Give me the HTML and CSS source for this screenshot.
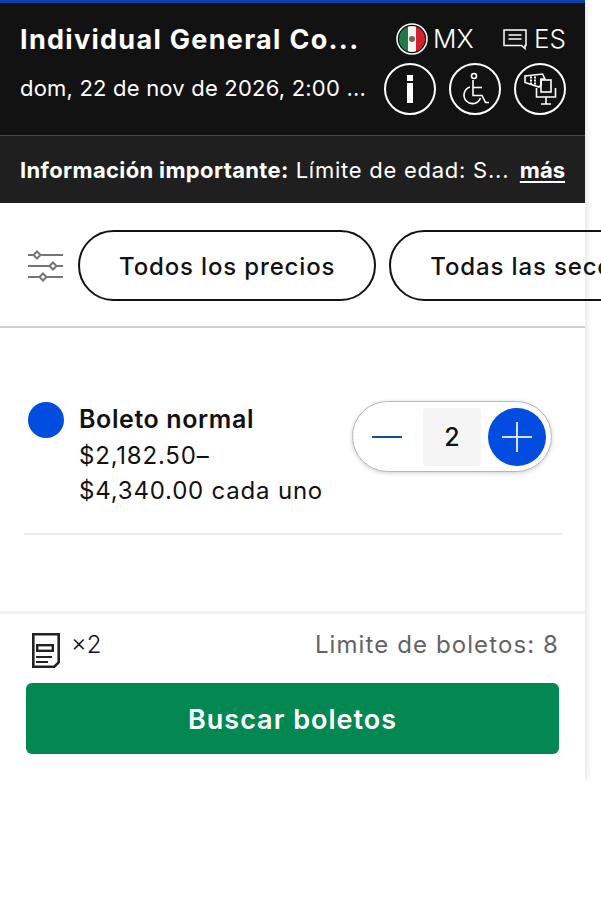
FILE: index.html
```html
<!DOCTYPE html>
<html lang="es">
<head>
    <meta charset="UTF-8">
    <title>Buscar boletos</title>
    <link rel="stylesheet" href="styles.css">
</head>
<body>
    <div class="panel">
        <header class="event-header">
            <div class="event-text">
                <h1>Individual General Co...</h1>
                <p>dom, 22 de nov de 2026, 2:00 ...</p>
            </div>
            <div class="event-tools">
                <div class="locale">
                    <span class="locale-item">
                        <svg class="flag" width="34" height="34" viewBox="0 0 34 34">
                            <clipPath id="flag-clip"><circle cx="17" cy="17" r="13"/></clipPath>
                            <g clip-path="url(#flag-clip)">
                                <rect x="4" y="4" width="9" height="26" fill="#1f7a45"/>
                                <rect x="13" y="4" width="8" height="26" fill="#f4f4f4"/>
                                <rect x="21" y="4" width="9" height="26" fill="#d3202f"/>
                                <circle cx="17" cy="17" r="3" fill="#77674a"/>
                            </g>
                            <circle cx="17" cy="17" r="15" fill="none" stroke="#fff" stroke-width="1.5"/>
                        </svg>
                        MX
                    </span>
                    <span class="locale-item lang">
                        <svg width="26" height="24" viewBox="0 0 26 24" fill="none" stroke="#fff" stroke-width="1.5">
                            <path d="M2 3h22v15.500h-1v3l-3.500-3H2z"/>
                            <path d="M6.500 8h13M6.500 12h13"/>
                        </svg>
                        ES
                    </span>
                </div>
                <div class="round-buttons">
                    <span class="round-btn">
                        <svg width="50" height="50" viewBox="0 0 50 50">
                            <rect x="22" y="11" width="6" height="6" fill="#fff"/>
                            <rect x="22" y="19" width="6" height="20" fill="#fff"/>
                        </svg>
                    </span>
                    <span class="round-btn">
                        <svg width="50" height="50" viewBox="0 0 50 50" fill="none" stroke="#fff" stroke-width="1.600">
                            <circle cx="24" cy="12" r="2.500"/>
                            <path d="M23 16v15.500h9l3.500 7h3.500"/>
                            <path d="M23 23.500h9"/>
                            <path d="M20 23a8.500 8.500 0 1 0 10.500 11"/>
                        </svg>
                    </span>
                    <span class="round-btn">
                        <svg width="50" height="50" viewBox="0 0 50 50" fill="none" stroke="#fff" stroke-width="1.600">
                            <path d="M10 12l17.500-2 2.500 5h-4v6l-2 2-14-4.500z"/>
                            <path d="M15 13.500h2M19 13.500h2M15 16.500h2M19 16.500h2M15 19.500h2M19 19.500h2" stroke-width="1.800"/>
                            <rect x="26" y="16" width="10" height="12"/>
                            <path d="M21.500 24v9h19v-9M31 33v7M26 40h10"/>
                        </svg>
                    </span>
                </div>
            </div>
        </header>

        <div class="notice">
            <p><strong>Información importante:</strong> Límite de edad: S...</p>
            <a href="#">más</a>
        </div>

        <div class="filters">
            <svg class="filter-icon" width="38" height="36" viewBox="0 0 38 36" fill="none" stroke="#757575" stroke-width="2">
                <path d="M1 7h35M1 18h35M1 29h35"/>
                <path d="M10 3.500l3.500 3.500-3.500 3.500L6.500 7z" fill="#fff"/>
                <path d="M26 14.500l3.500 3.500-3.500 3.500-3.500-3.500z" fill="#fff"/>
                <path d="M16 25.500l3.500 3.500-3.500 3.500-3.500-3.500z" fill="#fff"/>
            </svg>
            <span class="pill">Todos los precios</span>
            <span class="pill">Todas las secciones</span>
        </div>

        <div class="ticket">
            <span class="ticket-dot"></span>
            <div class="ticket-info">
                <h2>Boleto normal</h2>
                <p>$2,182.50–<br>$4,340.00 cada uno</p>
            </div>
            <div class="stepper">
                <span class="step-minus"></span>
                <span class="step-count">2</span>
                <span class="step-plus">
                    <svg width="58" height="58" viewBox="0 0 58 58" stroke="#d5e2fb" stroke-width="2">
                        <path d="M14 29h30M29 14v30"/>
                    </svg>
                </span>
            </div>
        </div>

        <footer class="summary">
            <div class="summary-row">
                <div class="summary-count">
                    <svg width="30" height="38" viewBox="0 0 30 38" fill="none" stroke="#222" stroke-width="2.600">
                        <path d="M2.300 3.300h25.400v28l-4.400 4.400H2.300z"/>
                        <rect x="6.200" y="14.200" width="15.600" height="5.600" stroke-width="2.400"/>
                        <path d="M5 26h16M5 31h12" stroke-width="2"/>
                    </svg>
                    <span>×2</span>
                </div>
                <span class="limit">Limite de boletos: 8</span>
            </div>
            <button class="search-btn">Buscar boletos</button>
        </footer>
    </div>
</body>
</html>
```

FILE: styles.css
```css
* {
    box-sizing: border-box;
}

body {
    margin: 0;
    background-color: #fff;
    color: #121212;
    font-family: 'Inter', sans-serif;
    overflow: hidden;
}

h1, h2, p {
    margin: 0;
}

.panel {
    width: 585px;
    height: 781px;
    background-color: #fff;
    box-shadow: 0 0 8px rgba(0, 0, 0, 0.16);
}

.event-header {
    height: 135px;
    background-color: #121212;
    border-top: 3px solid #0b3fa8;
    padding: 0 20px;
    display: flex;
    justify-content: space-between;
    color: #fff;
}

.event-text {
    padding-top: 18px;
    white-space: nowrap;
}

.event-text h1 {
    font-size: 27px;
    font-weight: 700;
    line-height: 37px;
    letter-spacing: 1.3px;
}

.event-text p {
    margin-top: 15px;
    font-size: 22px;
    font-weight: 400;
    line-height: 30px;
    letter-spacing: 0.2px;
}

.event-tools {
    width: 182px;
    flex-shrink: 0;
    margin-right: -1px;
    display: flex;
    flex-direction: column;
    align-items: flex-end;
}

.locale {
    height: 60px;
    width: 100%;
    display: flex;
    justify-content: space-between;
    padding: 12px 0 0 11px;
    font-size: 26px;
    font-weight: 300;
    line-height: 34px;
}

.locale-item {
    display: flex;
    align-items: center;
    gap: 4px;
}

.lang {
    gap: 6px;
}

.round-buttons {
    display: flex;
    gap: 13px;
}

.round-btn {
    width: 52px;
    height: 52px;
    border: 2px solid #fff;
    border-radius: 50%;
    display: flex;
    align-items: center;
    justify-content: center;
    flex-shrink: 0;
}

.round-btn svg {
    flex-shrink: 0;
}

.notice {
    height: 68px;
    background-color: #1f1f1f;
    border-top: 1px solid #454545;
    padding: 0 20px;
    display: flex;
    align-items: center;
    justify-content: space-between;
    color: #fff;
    font-size: 22px;
    letter-spacing: 0.75px;
    white-space: nowrap;
}

.notice strong {
    font-weight: 700;
    letter-spacing: 0.35px;
}

.notice a {
    color: #fff;
    font-weight: 700;
    letter-spacing: 0;
    text-decoration: underline;
    text-underline-offset: 3px;
}

.filters {
    width: 601px;
    height: 125px;
    padding: 0 0 0 27px;
    display: flex;
    align-items: center;
    gap: 13px;
    overflow: hidden;
    position: relative;
}

.filters::after {
    content: "";
    position: absolute;
    left: 0;
    bottom: 0;
    width: 585px;
    height: 2px;
    background-color: #cfcfcf;
}

.filter-icon {
    flex-shrink: 0;
}

.pill {
    flex-shrink: 0;
    height: 71px;
    padding: 1px 39px 0;
    border: 2px solid #121212;
    border-radius: 36px;
    display: flex;
    align-items: center;
    font-size: 24px;
    font-weight: 500;
    letter-spacing: 0.85px;
}

.ticket {
    height: 207px;
    margin: 0 23px 0 24px;
    border-bottom: 2px solid #ebebeb;
    padding: 73px 10px 0 4px;
    display: flex;
    align-items: flex-start;
}

.ticket-dot {
    width: 36px;
    height: 36px;
    margin-top: 1px;
    flex-shrink: 0;
    background-color: #024ddf;
    border-radius: 50%;
}

.ticket-info {
    flex: 1;
    margin-left: 15px;
    margin-top: -1px;
    font-size: 24px;
    line-height: 35px;
    letter-spacing: 0.8px;
}

.ticket-info h2 {
    font-size: 25px;
    font-weight: 600;
    line-height: 38px;
    letter-spacing: 0.6px;
}

.stepper {
    width: 200px;
    height: 71px;
    flex-shrink: 0;
    border: 1px solid #b5b5b5;
    border-radius: 36px;
    box-shadow: 0 1px 4px rgba(0, 0, 0, 0.2);
    display: flex;
    align-items: center;
    padding: 0 4px 0 19px;
}

.step-minus {
    width: 30px;
    height: 2px;
    background-color: #0f4d9e;
}

.step-count {
    width: 58px;
    height: 58px;
    margin-left: 21px;
    background-color: #f5f5f5;
    border-radius: 4px;
    display: flex;
    align-items: center;
    justify-content: center;
    font-size: 25px;
    font-weight: 500;
}

.step-plus {
    width: 58px;
    height: 58px;
    margin-left: 7px;
    background-color: #024ddf;
    border-radius: 50%;
    display: flex;
}

.summary {
    margin-top: 76px;
    height: 170px;
    border-top: 3px solid #f3f3f3;
    padding: 15px 26px 0;
}

.summary-row {
    height: 54px;
    display: flex;
    justify-content: space-between;
    align-items: flex-start;
}

.summary-count {
    display: flex;
    align-items: flex-start;
    gap: 10px;
    padding-left: 5px;
    font-size: 24px;
    font-weight: 300;
    line-height: 32px;
}

.summary-count svg {
    margin-top: 2px;
}

.limit {
    color: #646464;
    font-size: 24px;
    line-height: 32px;
    letter-spacing: 1.1px;
}

.search-btn {
    width: 533px;
    height: 71px;
    border: 0;
    border-radius: 6px;
    padding: 1px 0 0;
    background-color: #048851;
    color: #fff;
    font-family: inherit;
    font-size: 27px;
    font-weight: 600;
    letter-spacing: 1px;
}
```
